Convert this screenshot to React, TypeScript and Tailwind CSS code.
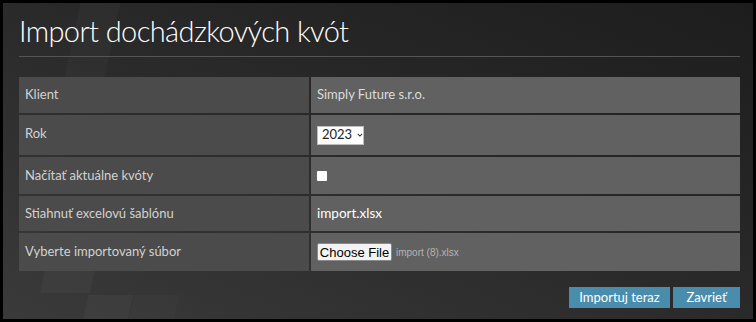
import React from "react";

const rows = [
  { label: "Klient", h: "h-[36px]" },
  { label: "Rok", h: "h-[40px]" },
  { label: "Načítať aktuálne kvóty", h: "h-[37px]" },
  { label: "Stiahnuť excelovú šablónu", h: "h-[35px]" },
  { label: "Vyberte importovaný súbor", h: "h-[38px]" },
];

const Value: React.FC<{ i: number }> = ({ i }) => {
  if (i === 0) return <span className="text-[#dcdcdc]">Simply Future s.r.o.</span>;
  if (i === 1)
    return (
      <div className="flex items-center h-[19px] w-[47px] bg-white border border-[#bdbdbd] pl-[4px] gap-[5px] text-[#222] text-[13px]">
        <span>2023</span>
        <svg width="8" height="6" viewBox="0 0 8 6" fill="none">
          <path d="M1 1.5l3 3 3-3" stroke="#333" strokeWidth="1.4" />
        </svg>
      </div>
    );
  if (i === 2) return <span className="block w-[10px] h-[10px] bg-white rounded-[1px]" />;
  if (i === 3) return <span className="text-white text-[13.5px]">import.xlsx</span>;
  return (
    <div className="flex items-center gap-[4px]">
      <button className="h-[18px] w-[75px] bg-[#f3f3f3] border border-[#8a8a8a] rounded-[2px] text-[13px] leading-none text-black font-['Liberation_Sans',Arial,sans-serif]">
        Choose File
      </button>
      <span className="text-[10px] text-[#b4b4b4] font-['Liberation_Sans',Arial,sans-serif]">import (8).xlsx</span>
    </div>
  );
};

export default function App() {
  return (
    <div className="relative w-[756px] h-[322px] overflow-hidden border-[3px] border-black bg-linear-to-tr from-[#3a3a3a] via-[#2a2a2a] to-[#1d1d1d] font-['Lato','Noto_Sans',sans-serif]">
      {/* faint background tiles */}
      <div className="absolute left-[70px] top-[-10px] w-[40px] h-[90px] bg-white/[0.025] -skew-x-12" />
      <div className="absolute left-[40px] top-[262px] w-[50px] h-[28px] bg-white/[0.03] -skew-x-12" />
      <div className="absolute left-[82px] top-[292px] w-[45px] h-[30px] bg-white/[0.03] -skew-x-12" />
      <div className="absolute left-[128px] top-[292px] w-[45px] h-[30px] bg-white/[0.02] -skew-x-12" />

      <div className="relative pl-[16px] pr-[13px] pt-[13px]">
        <h1 className="h-[30px] leading-[30px] text-[29px] tracking-[-0.6px] font-light text-white">Import dochádzkových kvót</h1>
        <div className="mt-[10px] h-px bg-[#555]" />

        <div className="mt-[20px] grid grid-cols-[290px_1fr] gap-[2px] text-[13px]">
          {rows.map((r, i) => (
            <React.Fragment key={r.label}>
              <div className={`${r.h} bg-[#4b4b4b] flex ${i === 1 ? "items-start pt-[9px]" : "items-center"} px-[6px] text-[#d2d2d2]`}>
                {r.label}
              </div>
              <div className={`${r.h} bg-[#616161] flex items-center px-[6px]`}>
                <Value i={i} />
              </div>
            </React.Fragment>
          ))}
        </div>

        <div className="mt-[16px] flex justify-end gap-[3px]">
          <button className="h-[21px] w-[101px] bg-[#4a8cab] text-white text-[13px]">Importuj teraz</button>
          <button className="h-[21px] w-[67px] bg-[#4a8cab] text-white text-[13px]">Zavrieť</button>
        </div>
      </div>
    </div>
  );
}
